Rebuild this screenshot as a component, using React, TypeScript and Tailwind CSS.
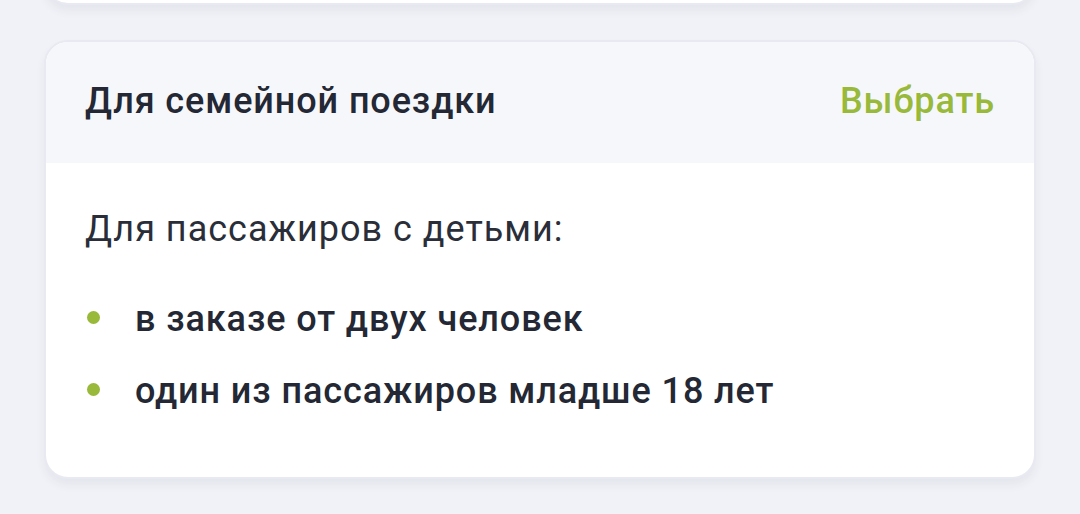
import React from 'react';

const items = ['в заказе от двух человек', 'один из пассажиров младше 18 лет'];

const App: React.FC = () => {
  return (
    <div className="min-h-[514px] bg-[#f1f2f7] px-[44px] font-['Roboto',sans-serif] overflow-hidden">
      <div className="mt-[-60px] h-[65px] rounded-[24px] bg-white border-2 border-[#e8e9f1] shadow-[0_6px_10px_rgba(40,50,90,0.06)]" />
      <div className="mt-[35px] rounded-[24px] border-2 border-[#e8e9f1] bg-white overflow-hidden shadow-[0_6px_10px_rgba(40,50,90,0.06)]">
        <div className="h-[121px] bg-[#f6f7fb] flex items-center justify-between pl-[39px] pr-[39px] pb-[4px]">
          <span className="text-[36px] font-medium text-[#232834] tracking-[0.9px]">Для семейной поездки</span>
          <button className="text-[36px] font-medium text-[#98b93a] tracking-[0.9px]">Выбрать</button>
        </div>
        <div className="pl-[39px] pt-[46px] pb-[66px]">
          <p className="text-[36px] text-[#2a2e39] leading-[40px] tracking-[1px]">Для пассажиров с детьми:</p>
          <ul className="mt-[50px] flex flex-col gap-[32px]">
            {items.map((t) => (
              <li key={t} className="flex items-center h-[40px]">
                <span className="w-[13px] h-[13px] rounded-full bg-[#98b93a] ml-[2px] mr-[35px] -mt-[4px]" />
                <span className="text-[36px] font-medium text-[#232834] leading-[40px] tracking-[0.9px]">{t}</span>
              </li>
            ))}
          </ul>
        </div>
      </div>
    </div>
  );
};

export default App;
